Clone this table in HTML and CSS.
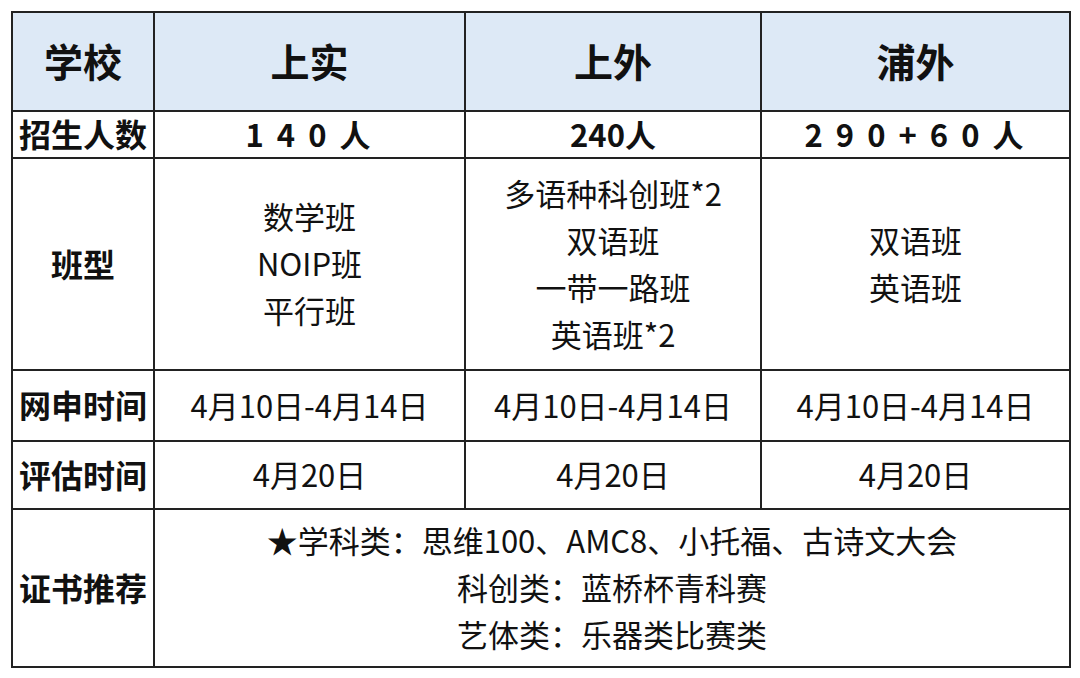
FILE: index.html
```html
<!DOCTYPE html>
<html lang="zh-CN">
<head>
<meta charset="utf-8">
<title>学校对比</title>
<link rel="stylesheet" href="styles.css">
</head>
<body>
<div class="sheet">
  <div class="cell head label">学校</div>
  <div class="cell head">上实</div>
  <div class="cell head">上外</div>
  <div class="cell head">浦外</div>

  <div class="cell label">招生人数</div>
  <div class="cell num spaced">1 4 0 人</div>
  <div class="cell num">240人</div>
  <div class="cell num spaced">2 9 0 + 6 0 人</div>

  <div class="cell label">班型</div>
  <div class="cell lines"><span>数学班</span><span>NOIP班</span><span>平行班</span></div>
  <div class="cell lines"><span>多语种科创班*2</span><span>双语班</span><span>一带一路班</span><span>英语班*2</span></div>
  <div class="cell lines"><span>双语班</span><span>英语班</span></div>

  <div class="cell label">网申时间</div>
  <div class="cell">4月10日-4月14日</div>
  <div class="cell">4月10日-4月14日</div>
  <div class="cell">4月10日-4月14日</div>

  <div class="cell label">评估时间</div>
  <div class="cell">4月20日</div>
  <div class="cell">4月20日</div>
  <div class="cell">4月20日</div>

  <div class="cell label">证书推荐</div>
  <div class="cell lines wide"><span>★学科类：思维100、AMC8、小托福、古诗文大会</span><span>科创类：蓝桥杯青科赛</span><span>艺体类：乐器类比赛类</span></div>
</div>
</body>
</html>
```

FILE: styles.css
```css
html, body {
  margin: 0;
  padding: 0;
  background: #ffffff;
}

body {
  font-family: "Noto Sans CJK SC", "Noto Sans", sans-serif;
  color: #111;
}

.sheet {
  margin: 11px 0 0 11px;
  width: 1060px;
  display: grid;
  grid-template-columns: 140px 309px 294px 307px;
  grid-template-rows: 97px 45px 210px 69px 66px 156px;
  gap: 2px;
  padding: 2px;
  box-sizing: border-box;
  background: #222;
}

.cell {
  background: #fff;
  display: flex;
  align-items: center;
  justify-content: center;
  font-size: 31px;
  font-weight: 400;
  line-height: 1;
  text-align: center;
  padding-bottom: 3px;
  box-sizing: border-box;
}

.head {
  background: #dde9f6;
  font-size: 39px;
  font-weight: 700;
}

.label {
  font-size: 32px;
  font-weight: 700;
}

.head.label {
  font-size: 39px;
}

.num {
  font-weight: 700;
  font-size: 31px;
}

.spaced {
  white-space: pre;
  letter-spacing: 3px;
}

.lines {
  flex-direction: column;
}

.lines span {
  display: block;
  line-height: 47px;
}

.wide {
  grid-column: 2 / span 3;
}
```
